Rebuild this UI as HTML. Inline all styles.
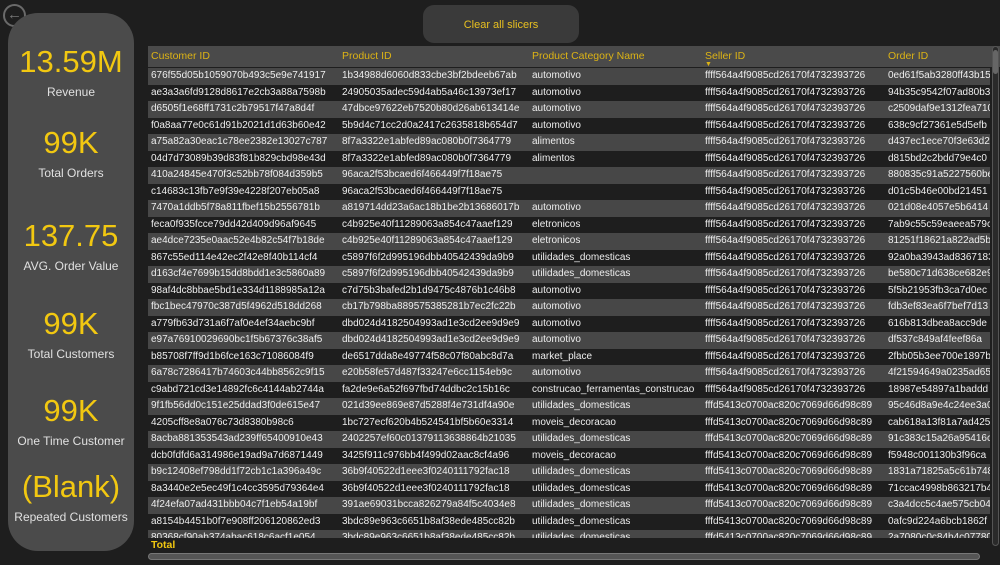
<!DOCTYPE html>
<html><head><meta charset="utf-8"><style>
*{margin:0;padding:0;box-sizing:border-box}
body{width:1000px;height:565px;background:#1e1e1e;font-family:"Liberation Sans",sans-serif;overflow:hidden;position:relative}
.card{position:absolute;left:8px;top:13px;width:126px;height:538px;background:#4b4b4b;border-radius:30px}
.k{position:absolute;left:0;width:142px;text-align:center}
.n{color:#f2c811;font-size:31px;line-height:30px}
.l{color:#e0e0e0;font-size:12px;line-height:14px}
.back{position:absolute;left:3px;top:4px;width:23px;height:23px;border:2px solid #6a6a6a;border-radius:50%;color:#777;font-size:15px;line-height:18px;text-align:center}
.btn{position:absolute;left:423px;top:5px;width:156px;height:38px;background:#3a3a3a;border-radius:11px;color:#e8c020;font-size:11px;text-align:center;line-height:40px}
.tbl{position:absolute;left:148px;top:46px;width:852px;height:516px;background:#1e1e1e;overflow:hidden}
.hd{position:absolute;left:0;top:0;width:852px;height:21px;background:#4a4a4a}
.hd span{position:absolute;top:4px;color:#dcb315;font-size:10.5px}
.body{position:absolute;left:0;top:22px;width:842px;height:470px;overflow:hidden}
.r{height:16.5px;position:relative;color:#eee;font-size:10px;line-height:16px;white-space:nowrap}
.r:nth-child(odd){background:#474747}
.r span{position:absolute;top:0}
.c1{left:3px}.c2{left:194px}.c3{left:384px}.c4{left:557px}.c5{left:740px}
.tot{position:absolute;left:3px;top:493px;color:#f2c811;font-size:10.5px;font-weight:bold}
.hs{position:absolute;left:0;top:507px;width:832px;height:7px;border:1px solid #777;border-radius:4px;background:#555}
.vs{position:absolute;left:844px;top:0;width:7px;height:500px;background:#2a2a2a;border:1px solid #555;border-radius:4px}
.vs i{position:absolute;left:0;top:3px;width:5px;height:24px;background:#666;border-radius:3px}
</style></head><body>
<div class="back">&#8592;</div>
<div class="card"></div>
<div class="k n" style="top:47px">13.59M</div><div class="k l" style="top:85px">Revenue</div>
<div class="k n" style="top:128px">99K</div><div class="k l" style="top:166px">Total Orders</div>
<div class="k n" style="top:221px">137.75</div><div class="k l" style="top:259px">AVG. Order Value</div>
<div class="k n" style="top:309px">99K</div><div class="k l" style="top:347px">Total Customers</div>
<div class="k n" style="top:396px">99K</div><div class="k l" style="top:434px">One Time Customer</div>
<div class="k n" style="top:472px">(Blank)</div><div class="k l" style="top:510px">Repeated Customers</div>
<div class="btn">Clear all slicers</div>
<div class="tbl">
<div class="hd"><span style="left:3px">Customer ID</span><span style="left:194px">Product ID</span><span style="left:384px">Product Category Name</span><span style="left:557px">Seller ID<br><b style="font-size:7px;position:relative;top:-5px">&#9660;</b></span><span style="left:740px">Order ID</span></div>
<div class="body">
<div class="r"><span class="c1">676f55d05b1059070b493c5e9e741917</span><span class="c2">1b34988d6060d833cbe3bf2bdeeb67ab</span><span class="c3">automotivo</span><span class="c4">ffff564a4f9085cd26170f4732393726</span><span class="c5">0ed61f5ab3280ff43b15</span></div>
<div class="r"><span class="c1">ae3a3a6fd9128d8617e2cb3a88a7598b</span><span class="c2">24905035adec59d4ab5a46c13973ef17</span><span class="c3">automotivo</span><span class="c4">ffff564a4f9085cd26170f4732393726</span><span class="c5">94b35c9542f07ad80b3</span></div>
<div class="r"><span class="c1">d6505f1e68ff1731c2b79517f47a8d4f</span><span class="c2">47dbce97622eb7520b80d26ab613414e</span><span class="c3">automotivo</span><span class="c4">ffff564a4f9085cd26170f4732393726</span><span class="c5">c2509daf9e1312fea710</span></div>
<div class="r"><span class="c1">f0a8aa77e0c61d91b2021d1d63b60e42</span><span class="c2">5b9d4c71cc2d0a2417c2635818b654d7</span><span class="c3">automotivo</span><span class="c4">ffff564a4f9085cd26170f4732393726</span><span class="c5">638c9cf27361e5d5efb</span></div>
<div class="r"><span class="c1">a75a82a30eac1c78ee2382e13027c787</span><span class="c2">8f7a3322e1abfed89ac080b0f7364779</span><span class="c3">alimentos</span><span class="c4">ffff564a4f9085cd26170f4732393726</span><span class="c5">d437ec1ece70f3e63d2</span></div>
<div class="r"><span class="c1">04d7d73089b39d83f81b829cbd98e43d</span><span class="c2">8f7a3322e1abfed89ac080b0f7364779</span><span class="c3">alimentos</span><span class="c4">ffff564a4f9085cd26170f4732393726</span><span class="c5">d815bd2c2bdd79e4c0</span></div>
<div class="r"><span class="c1">410a24845e470f3c52bb78f084d359b5</span><span class="c2">96aca2f53bcaed6f466449f7f18ae75</span><span class="c3"></span><span class="c4">ffff564a4f9085cd26170f4732393726</span><span class="c5">880835c91a5227560be</span></div>
<div class="r"><span class="c1">c14683c13fb7e9f39e4228f207eb05a8</span><span class="c2">96aca2f53bcaed6f466449f7f18ae75</span><span class="c3"></span><span class="c4">ffff564a4f9085cd26170f4732393726</span><span class="c5">d01c5b46e00bd21451</span></div>
<div class="r"><span class="c1">7470a1ddb5f78a811fbef15b2556781b</span><span class="c2">a819714dd23a6ac18b1be2b13686017b</span><span class="c3">automotivo</span><span class="c4">ffff564a4f9085cd26170f4732393726</span><span class="c5">021d08e4057e5b6414</span></div>
<div class="r"><span class="c1">feca0f935fcce79dd42d409d96af9645</span><span class="c2">c4b925e40f11289063a854c47aaef129</span><span class="c3">eletronicos</span><span class="c4">ffff564a4f9085cd26170f4732393726</span><span class="c5">7ab9c55c59eaeea579c</span></div>
<div class="r"><span class="c1">ae4dce7235e0aac52e4b82c54f7b18de</span><span class="c2">c4b925e40f11289063a854c47aaef129</span><span class="c3">eletronicos</span><span class="c4">ffff564a4f9085cd26170f4732393726</span><span class="c5">81251f18621a822ad5b</span></div>
<div class="r"><span class="c1">867c55ed114e42ec2f42e8f40b114cf4</span><span class="c2">c5897f6f2d995196dbb40542439da9b9</span><span class="c3">utilidades_domesticas</span><span class="c4">ffff564a4f9085cd26170f4732393726</span><span class="c5">92a0ba3943ad8367183</span></div>
<div class="r"><span class="c1">d163cf4e7699b15dd8bdd1e3c5860a89</span><span class="c2">c5897f6f2d995196dbb40542439da9b9</span><span class="c3">utilidades_domesticas</span><span class="c4">ffff564a4f9085cd26170f4732393726</span><span class="c5">be580c71d638ce682e9</span></div>
<div class="r"><span class="c1">98af4dc8bbae5bd1e334d1188985a12a</span><span class="c2">c7d75b3bafed2b1d9475c4876b1c46b8</span><span class="c3">automotivo</span><span class="c4">ffff564a4f9085cd26170f4732393726</span><span class="c5">5f5b21953fb3ca7d0ec</span></div>
<div class="r"><span class="c1">fbc1bec47970c387d5f4962d518dd268</span><span class="c2">cb17b798ba889575385281b7ec2fc22b</span><span class="c3">automotivo</span><span class="c4">ffff564a4f9085cd26170f4732393726</span><span class="c5">fdb3ef83ea6f7bef7d13</span></div>
<div class="r"><span class="c1">a779fb63d731a6f7af0e4ef34aebc9bf</span><span class="c2">dbd024d4182504993ad1e3cd2ee9d9e9</span><span class="c3">automotivo</span><span class="c4">ffff564a4f9085cd26170f4732393726</span><span class="c5">616b813dbea8acc9de</span></div>
<div class="r"><span class="c1">e97a76910029690bc1f5b67376c38af5</span><span class="c2">dbd024d4182504993ad1e3cd2ee9d9e9</span><span class="c3">automotivo</span><span class="c4">ffff564a4f9085cd26170f4732393726</span><span class="c5">df537c849af4feef86a</span></div>
<div class="r"><span class="c1">b85708f7ff9d1b6fce163c71086084f9</span><span class="c2">de6517dda8e49774f58c07f80abc8d7a</span><span class="c3">market_place</span><span class="c4">ffff564a4f9085cd26170f4732393726</span><span class="c5">2fbb05b3ee700e1897b</span></div>
<div class="r"><span class="c1">6a78c7286417b74603c44bb8562c9f15</span><span class="c2">e20b58fe57d487f33247e6cc1154eb9c</span><span class="c3">automotivo</span><span class="c4">ffff564a4f9085cd26170f4732393726</span><span class="c5">4f21594649a0235ad65</span></div>
<div class="r"><span class="c1">c9abd721cd3e14892fc6c4144ab2744a</span><span class="c2">fa2de9e6a52f697fbd74ddbc2c15b16c</span><span class="c3">construcao_ferramentas_construcao</span><span class="c4">ffff564a4f9085cd26170f4732393726</span><span class="c5">18987e54897a1baddd</span></div>
<div class="r"><span class="c1">9f1fb56dd0c151e25ddad3f0de615e47</span><span class="c2">021d39ee869e87d5288f4e731df4a90e</span><span class="c3">utilidades_domesticas</span><span class="c4">fffd5413c0700ac820c7069d66d98c89</span><span class="c5">95c46d8a9e4c24ee3a0</span></div>
<div class="r"><span class="c1">4205cff8e8a076c73d8380b98c6</span><span class="c2">1bc727ecf620b4b524541bf5b60e3314</span><span class="c3">moveis_decoracao</span><span class="c4">fffd5413c0700ac820c7069d66d98c89</span><span class="c5">cab618a13f81a7ad425</span></div>
<div class="r"><span class="c1">8acba881353543ad239ff65400910e43</span><span class="c2">2402257ef60c01379113638864b21035</span><span class="c3">utilidades_domesticas</span><span class="c4">fffd5413c0700ac820c7069d66d98c89</span><span class="c5">91c383c15a26a95416c</span></div>
<div class="r"><span class="c1">dcb0fdfd6a314986e19ad9a7d6871449</span><span class="c2">3425f911c976bb4f499d02aac8cf4a96</span><span class="c3">moveis_decoracao</span><span class="c4">fffd5413c0700ac820c7069d66d98c89</span><span class="c5">f5948c001130b3f96ca</span></div>
<div class="r"><span class="c1">b9c12408ef798dd1f72cb1c1a396a49c</span><span class="c2">36b9f40522d1eee3f0240111792fac18</span><span class="c3">utilidades_domesticas</span><span class="c4">fffd5413c0700ac820c7069d66d98c89</span><span class="c5">1831a71825a5c61b748</span></div>
<div class="r"><span class="c1">8a3440e2e5ec49f1c4cc3595d79364e4</span><span class="c2">36b9f40522d1eee3f0240111792fac18</span><span class="c3">utilidades_domesticas</span><span class="c4">fffd5413c0700ac820c7069d66d98c89</span><span class="c5">71ccac4998b863217b4</span></div>
<div class="r"><span class="c1">4f24efa07ad431bbb04c7f1eb54a19bf</span><span class="c2">391ae69031bcca826279a84f5c4034e8</span><span class="c3">utilidades_domesticas</span><span class="c4">fffd5413c0700ac820c7069d66d98c89</span><span class="c5">c3a4dcc5c4ae575cb04</span></div>
<div class="r"><span class="c1">a8154b4451b0f7e908ff206120862ed3</span><span class="c2">3bdc89e963c6651b8af38ede485cc82b</span><span class="c3">utilidades_domesticas</span><span class="c4">fffd5413c0700ac820c7069d66d98c89</span><span class="c5">0afc9d224a6bcb1862f</span></div>
<div class="r"><span class="c1">80368cf90ab374abac618c6acf1e054</span><span class="c2">3bdc89e963c6651b8af38ede485cc82b</span><span class="c3">utilidades_domesticas</span><span class="c4">fffd5413c0700ac820c7069d66d98c89</span><span class="c5">2a7080c0c84b4c07780</span></div>
</div>
<div class="tot">Total</div>
<div class="hs"></div>
<div class="vs"><i></i></div>
</div>
</body></html>
